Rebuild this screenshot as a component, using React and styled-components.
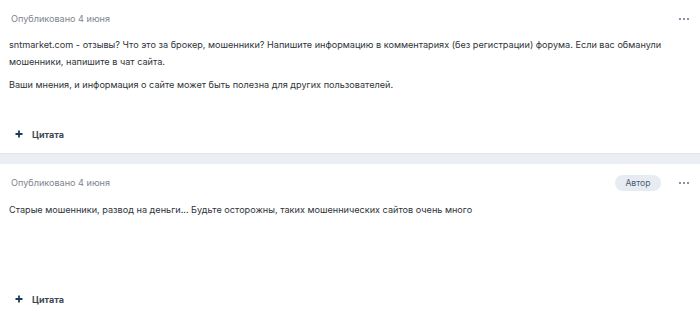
import React from 'react'
import styled, { createGlobalStyle } from 'styled-components'

const Global = createGlobalStyle`
  html, body { margin: 0; padding: 0; background: #fff; }
  body { font-family: Inter, "Noto Sans", sans-serif; -webkit-font-smoothing: antialiased; }
`

const Feed = styled.div`
  display: flex;
  flex-direction: column;
  width: 700px;
`

const Post = styled.article`
  background: #fff;
  padding: 11px 10px 0 9px;
  padding-bottom: ${props => props.last ? '0' : '11px'};
`

const Divider = styled.div`
  height: 10px;
  background: #ebeef3;
  border-top: 1px solid #e1e5eb;
`

const Head = styled.div`
  display: flex;
  align-items: center;
  height: 16px;
  gap: 18px;
  margin-right: -3px;
`

const Meta = styled.span`
  flex: 1;
  padding-left: 2px;
  font-size: 9.1px;
  line-height: 16px;
  color: #80858d;
`

const Badge = styled.span`
  display: inline-flex;
  align-items: center;
  height: 16px;
  padding: 0 10px;
  border-radius: 8px;
  background: #e7ecf2;
  color: #4d5e72;
  font-size: 8.6px;
`

const Dots = styled.button`
  border: 0;
  background: none;
  padding: 0 4px 0 0;
  display: flex;
  gap: 1.5px;
  cursor: pointer;
  span {
    width: 2.5px;
    height: 2.5px;
    background: #5f7187;
    border-radius: 50%;
  }
`

const Body = styled.div`
  margin-top: ${props => props.author ? '10px' : '9px'};
  min-height: 80px;
  font-size: 9.15px;
  line-height: 17px;
  color: #2e3338;
  p { margin: 0 0 6px 0; }
`

const QuoteBtn = styled.button`
  display: flex;
  align-items: center;
  gap: 9px;
  margin-top: 10px;
  margin-left: 6px;
  border: 0;
  background: none;
  padding: 0;
  height: 16px;
  font-family: inherit;
  font-size: 9px;
  font-weight: 700;
  color: #3f4754;
  cursor: pointer;
`

function Plus() {
  return (
    <svg width="8" height="8" viewBox="0 0 8 8">
      <path d="M4 0.5v7M0.5 4h7" stroke="#1d3a5a" strokeWidth="1.8" />
    </svg>
  )
}

function Comment(props) {
  return (
    <Post last={props.last}>
      <Head>
        <Meta>Опубликовано 4 июня</Meta>
        {props.author && <Badge>Автор</Badge>}
        <Dots><span /><span /><span /></Dots>
      </Head>
      <Body author={props.author}>
        {props.paragraphs.map((t, i) => <p key={i}>{t}</p>)}
      </Body>
      <QuoteBtn><Plus /> Цитата</QuoteBtn>
    </Post>
  )
}

export default function App() {
  return (
    <Feed>
      <Global />
      <Comment
        paragraphs={[
          'sntmarket.com - отзывы? Что это за брокер, мошенники? Напишите информацию в комментариях (без регистрации) форума. Если вас обманули мошенники, напишите в чат сайта.',
          'Ваши мнения, и информация о сайте может быть полезна для других пользователей.',
        ]}
      />
      <Divider />
      <Comment
        author
        last
        paragraphs={['Старые мошенники, развод на деньги... Будьте осторожны, таких мошеннических сайтов очень много']}
      />
    </Feed>
  )
}
